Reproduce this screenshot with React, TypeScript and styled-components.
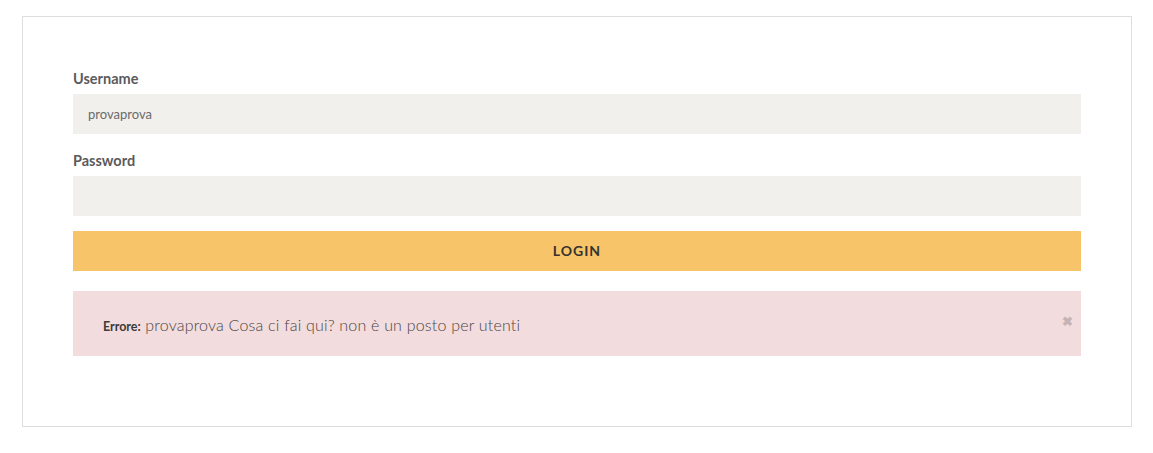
import React from "react";
import styled, { createGlobalStyle } from "styled-components";

const Global = createGlobalStyle`
  html, body { margin: 0; padding: 0; background: #fff; }
  body { font-family: "Lato", "Open Sans", sans-serif; }
  * { box-sizing: border-box; }
`;

const Page = styled.div`
  padding: 16px 21px 26px 22px;
`;

const Card = styled.form`
  border: 1px solid #dedede;
  padding: 52px 50px 70px 50px;
  display: flex;
  flex-direction: column;
`;

const Field = styled.div`
  display: flex;
  flex-direction: column;
  margin-bottom: ${(p: { $mb: number }) => p.$mb}px;
`;

const Label = styled.label`
  font-size: 14.5px;
  font-weight: 700;
  line-height: 20px;
  height: 20px;
  color: #5b5a5c;
  margin-bottom: 5px;
`;

const Input = styled.input`
  height: 40px;
  border: none;
  background: #f1f0ec;
  padding: 0 15px;
  font-family: "Lato", sans-serif;
  font-size: 13px;
  color: #6a6a6a;
  outline: none;
`;

const Button = styled.button`
  height: 40px;
  border: none;
  background: #f7c46a;
  font-family: "Lato", sans-serif;
  font-weight: 700;
  font-size: 14px;
  letter-spacing: 1px;
  color: #36322f;
  text-transform: uppercase;
  margin-bottom: 20px;
  padding: 0 0 1px;
`;

const Alert = styled.div`
  height: 65px;
  background: #f2dcdd;
  display: flex;
  align-items: center;
  justify-content: space-between;
  padding: 2px 8px 0 30px;
  color: #4a4545;
`;

const AlertText = styled.p`
  margin: 0;
  font-size: 16px;
  font-weight: 300;
  letter-spacing: 0.2px;
`;

const Strong = styled.strong`
  font-size: 12.5px;
  font-weight: 700;
  letter-spacing: 0;
  color: #3e3a3a;
`;

const Close = styled.span`
  color: #c5b3b5;
  font-size: 13px;
  font-weight: 700;
  margin-top: -8px;
`;

export default function App() {
  return (
    <>
      <Global />
      <Page>
        <Card onSubmit={(e) => e.preventDefault()}>
          <Field $mb={17}>
            <Label>Username</Label>
            <Input defaultValue="provaprova" />
          </Field>
          <Field $mb={15}>
            <Label>Password</Label>
            <Input type="password" />
          </Field>
          <Button type="submit">Login</Button>
          <Alert>
            <AlertText>
              <Strong>Errore:</Strong> provaprova Cosa ci fai qui? non è un posto per utenti
            </AlertText>
            <Close>✖</Close>
          </Alert>
        </Card>
      </Page>
    </>
  );
}
